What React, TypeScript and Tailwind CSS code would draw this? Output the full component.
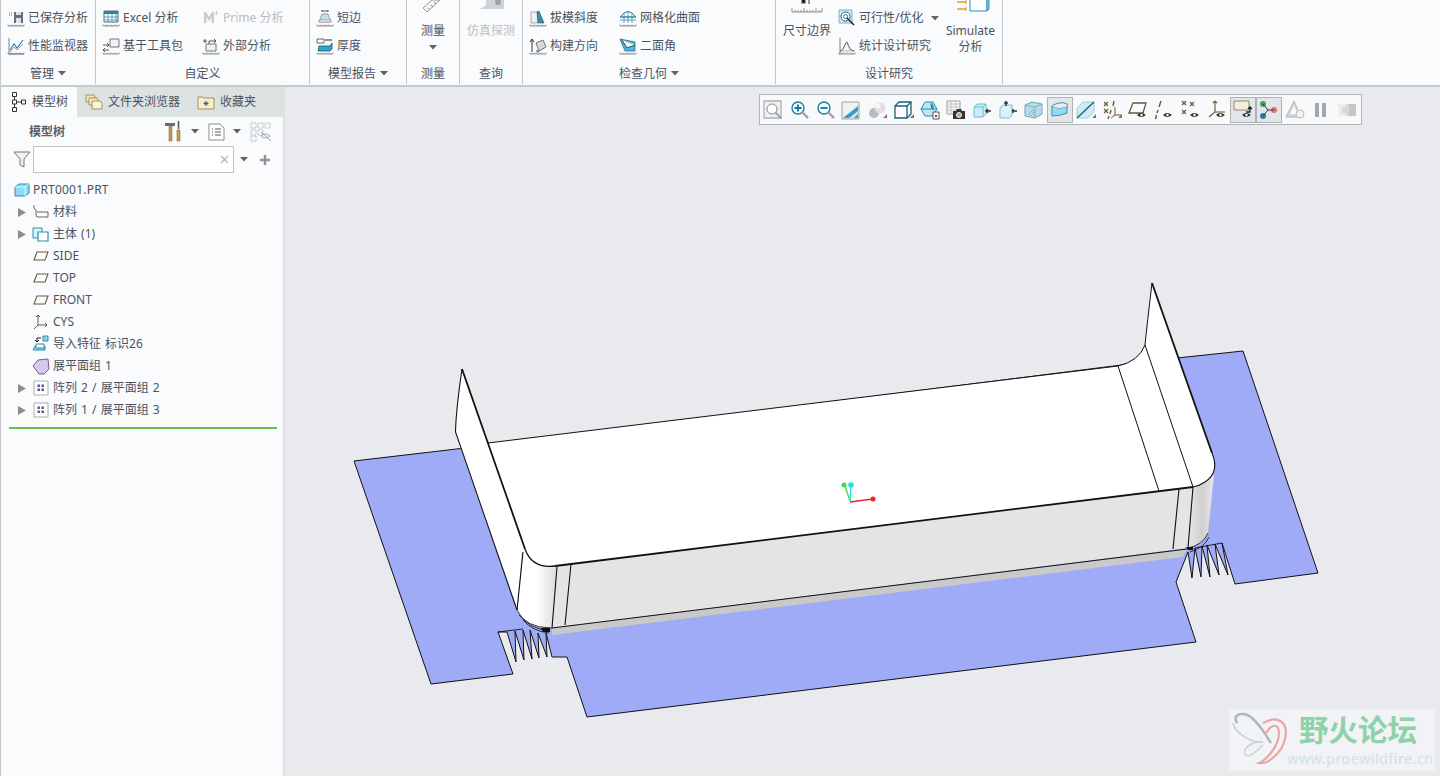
import React from "react";

const Ruler = () => (
  <path d="M1 17h16M1 15.500v1.500M3 16v1M5 15.500v1.500M7 16v1M9 15.500v1.500M11 16v1M13 15.500v1.500M15 16v1M17 15.500v1.500" stroke="#7d8387" strokeWidth="0.8" fill="none" />
);

const I = ({ children, s = 18 }: { children: React.ReactNode; s?: number }) => (
  <svg width={s} height={s} viewBox="0 0 18 18" className="shrink-0" fill="none">{children}</svg>
);

const Caret = ({ c = "#5f6468" }: { c?: string }) => (
  <svg width="8" height="5" viewBox="0 0 8 5" className="shrink-0"><path d="M0 0h8L4 4.500z" fill={c} /></svg>
);

const Item = ({ icon, text, dim, gap = "gap-[3px]" }: { icon: React.ReactNode; text: string; dim?: boolean; gap?: string }) => (
  <div className={`h-[28px] flex items-center whitespace-nowrap ${gap} ${dim ? "text-[#b9bdc1]" : ""}`}>
    {icon}
    <span>{text}</span>
  </div>
);

const Group = ({ w, label, caret, children }: { w: string; label: string; caret?: boolean; children: React.ReactNode }) => (
  <div className={`${w} shrink-0 flex flex-col border-r border-[#c3c7c9] h-[84px]`}>
    <div className="h-[63px] overflow-hidden flex">{children}</div>
    <div className="h-[21px] flex items-center justify-center gap-[4px] text-[#4b5360]">
      <span>{label}</span>
      {caret && <Caret />}
    </div>
  </div>
);

const Col = ({ w, children }: { w: string; children: React.ReactNode }) => (
  <div className={`${w} shrink-0 flex flex-col pt-[4px]`}>{children}</div>
);

const Ribbon = () => (
  <div className="h-[87px] shrink-0 flex bg-[#f9fbfd] border-b-[2px] border-[#c6cccc] border-l border-l-[#c3c7c9] text-[12px] text-[#4b5360]">
    <Group w="w-[95px]" label="管理" caret>
      <Col w="w-full pl-[6px]">
        <Item text="已保存分析" gap="gap-[3px]" icon={<I><path d="M2 4h1M4 4h1M2 6h1M4 6h1" stroke="#777" /><path d="M7 3h9v11H7z" fill="#6a6f73" /><path d="M9 3h5v3H9zM9 9h5v5H9z" fill="#dfe3e6" /><Ruler /></I>} />
        <Item text="性能监视器" gap="gap-[3px]" icon={<I><path d="M2 1v16M2 17h15" stroke="#7d8387" /><path d="M3 13l4-6 3 4 6-8" stroke="#1f7fa0" strokeWidth="1.100" /><path d="M3 15l4-5 3 3 6-6" stroke="#9a9ea2" /><Ruler /></I>} />
      </Col>
    </Group>
    <Group w="w-[214px]" label="自定义">
      <Col w="w-[106px] pl-[6px]">
        <Item text="Excel 分析" gap="gap-[3px]" icon={<I><path d="M2 2h14v11H2z" fill="#fff" stroke="#666" /><path d="M2 2h14v3H2z" fill="#1b86b0" /><path d="M2 8h14M2 11h14M6 5v8M10 5v8M14 5v8" stroke="#1b86b0" strokeWidth="0.7" /><Ruler /></I>} />
        <Item text="基于工具包" gap="gap-[3px]" icon={<I><path d="M8 2h9v8H8z" fill="#eef3f5" stroke="#777" /><path d="M1 8h6M5 6l2 2-2 2M1 13h6M3 11l-2 2 2 2" stroke="#444" strokeWidth="0.9" /><Ruler /></I>} />
      </Col>
      <Col w="w-[100px]">
        <Item text="Prime 分析" dim gap="gap-[3px]" icon={<I><path d="M2 14V3h2l3 5 3-5h2v11h-2.500V8L7 12 4.500 8v6z" fill="#c8cccf" /><path d="M15 2l-1 4" stroke="#c8cccf" strokeWidth="1.500" /></I>} />
        <Item text="外部分析" icon={<I><path d="M4 7h10v7H4z" fill="#eef3f5" stroke="#777" /><path d="M7 7V4h7M12 2l2 2-2 2M3 2v4M1 4h4" stroke="#444" strokeWidth="0.9" /><Ruler /></I>} />
      </Col>
    </Group>
    <Group w="w-[97px]" label="模型报告" caret>
      <Col w="w-full pl-[6px]">
        <Item text="短边" icon={<I><path d="M6 2h6M6 1v2M12 1v2" stroke="#333" strokeWidth="0.8" /><path d="M6 5h6l3 8H3z" fill="#bfe3f2" stroke="#777" strokeWidth="0.7" /><path d="M3 11h12v2H3z" fill="#fff" stroke="#777" strokeWidth="0.6" /><Ruler /></I>} />
        <Item text="厚度" icon={<I><path d="M1 2h7v4H1z" fill="#fff" stroke="#222" strokeWidth="0.7" /><path d="M9 3h7" stroke="#222" /><path d="M3 9h11l2-3v6l-2 2H2z" fill="#35a2c9" stroke="#135d78" strokeWidth="0.8" /><Ruler /></I>} />
      </Col>
    </Group>
    <Group w="w-[53px]" label="测量">
      <div className="w-full flex flex-col items-center">
        <svg width="24" height="12" viewBox="0 0 24 12" className="shrink-0"><path d="M2 8l9-8h8L6 12z" fill="#f2f4f5" stroke="#999" /><path d="M7 8l2 2M10 5l2 2M13 2l2 2" stroke="#888" /></svg>
        <span className="mt-[10px] leading-[17px]">测量</span>
        <div className="mt-[6px]"><Caret /></div>
      </div>
    </Group>
    <Group w="w-[63px]" label="查询">
      <div className="w-full flex flex-col items-center text-[#b9bdc1]">
        <svg width="30" height="9" viewBox="0 0 30 9" className="shrink-0"><path d="M4 9l6-4V0h18v9z" fill="#d0d3d5" /><circle cx="22" cy="2" r="3" fill="#9ea2a5" /></svg>
        <span className="mt-[13px] leading-[17px]">仿真探测</span>
      </div>
    </Group>
    <Group w="w-[253px]" label="检查几何" caret>
      <Col w="w-[96px] pl-[6px]">
        <Item text="拔模斜度" icon={<I><path d="M2 3h7v11H2z" fill="#eef1f2" stroke="#888" strokeWidth="0.7" /><path d="M8 3l2-1 5 12H9z" fill="#3a8fb0" stroke="#235" strokeWidth="0.5" /><Ruler /></I>} />
        <Item text="构建方向" icon={<I><path d="M3 15V3M1 5l2-3 2 3" stroke="#333" /><path d="M7 6l7-3 3 7-7 4z" fill="#d5d9dc" stroke="#777" /><path d="M7 13l4 1-3 2z" fill="#3a8fb0" /><Ruler /></I>} />
      </Col>
      <Col w="w-[130px]">
        <Item text="网格化曲面" icon={<I><path d="M1 8q8-11 16 0z" fill="#fff" stroke="#1f7fa0" /><path d="M1 11h16M5 4v10M9 2v12M13 4v10M1 8h16" stroke="#1f7fa0" strokeWidth="0.7" /><Ruler /></I>} />
        <Item text="二面角" icon={<I><path d="M1 2l15 3v9H6z" fill="#4db8dc" stroke="#1c5f78" strokeWidth="0.7" /><path d="M3 3l5 8 8-3" fill="#f3f7f9" stroke="#222" strokeWidth="0.8" /><Ruler /></I>} />
      </Col>
    </Group>
    <Group w="w-[227px]" label="设计研究">
      <div className="w-[62px] shrink-0 flex flex-col items-center">
        <svg width="32" height="14" viewBox="0 0 32 14" className="shrink-0"><path d="M1 12h30M1 8v4M4 10v2M7 10v2M10 10v2M13 8v4M16 10v2M19 10v2M22 10v2M25 8v4M28 10v2M31 8v4" stroke="#777" strokeWidth="0.8" /><path d="M11 0v3h3V0M18 0v4" stroke="#555" strokeWidth="1.200" /></svg>
        <span className="mt-[8px] leading-[17px] whitespace-nowrap">尺寸边界</span>
      </div>
      <Col w="w-[104px]">
        <div className="h-[28px] flex items-center gap-[3px] whitespace-nowrap">
          <I><path d="M1 1h13v13H1z" fill="#cfeaf5" stroke="#6db7d3" /><circle cx="7.500" cy="7.500" r="4.500" fill="#fff" stroke="#555" /><circle cx="7.500" cy="7.500" r="2" stroke="#1f7fa0" /><path d="M9 9l7 7" stroke="#222" strokeWidth="1.500" /></I>
          <span>可行性/优化</span>
          <div className="ml-[5px]"><Caret /></div>
        </div>
        <Item text="统计设计研究" icon={<I><path d="M2 1v16" stroke="#7d8387" /><path d="M2 14q3 0 5-6t3 0q2 6 6 6" stroke="#444" strokeWidth="0.9" /><path d="M2 14h15" stroke="#888" strokeWidth="0.6" /><Ruler /></I>} />
      </Col>
      <div className="w-[60px] shrink-0 flex flex-col items-center pr-[3px]">
        <svg width="34" height="12" viewBox="0 0 34 12" className="shrink-0 ml-[6px]"><path d="M0 2h9M0 9h9" stroke="#e0a020" strokeWidth="1.400" /><path d="M9 0v4M9 7v4" stroke="#e0a020" /><path d="M13 -2h17v13H13z" fill="#fff" stroke="#2f8db3" /><path d="M30 -2l2 -1v12l-2 2z" fill="#9cd3e8" stroke="#2f8db3" /></svg>
        <span className="mt-[10px] leading-[17px]">Simulate</span>
        <span className="leading-[16px]">分析</span>
      </div>
    </Group>
  </div>
);

const Plane = () => <I s={18}><path d="M2 13l3-8h11l-3 8z" stroke="#6b5a3a" strokeWidth="1.100" /></I>;
const Arrow = () => <svg width="8" height="9" viewBox="0 0 8 9" className="shrink-0"><path d="M0 0l8 4.500L0 9z" fill="#8b8f92" /></svg>;
const Pattern = () => (
  <I><path d="M2 2h14v14H2z" fill="#fff" stroke="#a9adb1" /><path d="M5 5h3v3H5zM10 5h3v3h-3zM5 10h3v3H5zM10 10h3v3h-3z" fill="#5d4a88" transform="translate(1.500 1.500) scale(0.8)" /></I>
);

const rows: { t: string; arrow?: boolean; icon: React.ReactNode }[] = [
  { t: "材料", arrow: true, icon: <I><path d="M2 2q-1 4 2 5v5q0 2 2 2h10V9H5" stroke="#555" strokeWidth="0.9" /></I> },
  { t: "主体 (1)", arrow: true, icon: <I><path d="M1 3h9v10H1z" fill="#d9f1fa" stroke="#2f8db3" /><path d="M6 7h10v9H6z" fill="#fff" stroke="#2f8db3" strokeWidth="1.200" /></I> },
  { t: "SIDE", icon: <Plane /> },
  { t: "TOP", icon: <Plane /> },
  { t: "FRONT", icon: <Plane /> },
  { t: "CYS", icon: <I><path d="M6 2v10M6 12l9 0M6 12l-4 4M4 4l2-2 2 2M13 10l2 2-2 2" stroke="#6b5a3a" /></I> },
  { t: "导入特征 标识26", icon: <I><path d="M3 11h10v4H1z" fill="#8fd3ea" stroke="#2f8db3" /><path d="M4 9h8v4H4z" fill="#fff" stroke="#2f8db3" /><path d="M11 1h5v5h-5z" fill="#8fd3ea" stroke="#2f8db3" /><path d="M9 3H5v4M3 5l2 2 2-2" stroke="#222" /></I> },
  { t: "展平面组 1", icon: <I><path d="M1 9l5-6 10-1 1 10-5 5H7z" fill="#d6c8ee" stroke="#75608f" /></I> },
  { t: "阵列 2 / 展平面组 2", arrow: true, icon: <Pattern /> },
  { t: "阵列 1 / 展平面组 3", arrow: true, icon: <Pattern /> },
];

const Panel = () => (
  <div className="w-[285px] shrink-0 flex flex-col bg-[#dee2e5] border-l border-[#c3c7c9]">
    <div className="h-[30px] shrink-0 flex items-stretch bg-[#dce2e2] text-[12px] text-[#4b5360]">
      <div className="w-[76px] bg-[#f9fbfd] flex items-center pl-[11px] gap-[6px]">
        <svg width="14" height="20" viewBox="0 0 14 20" className="shrink-0" fill="none"><path d="M.500.500h4v4h-4zM.500 8h4v4h-4zM.500 15.500h4v4h-4zM9.500 8h4v4h-4zM2.500 4.500V8M2.500 12v3.500M4.500 10h5" stroke="#333" strokeWidth="1" /></svg>
        <span>模型树</span>
      </div>
      <div className="flex items-center pl-[8px] gap-[5px]">
        <I><path d="M1 2h8l1 2v5H1z" fill="#f3e6b8" stroke="#a88f58" /><path d="M4 5h8l1 2v5H4z" fill="#f6ecc6" stroke="#a88f58" /><path d="M7 8h8l2 2v6H7z" fill="#fbf3d8" stroke="#a88f58" /></I>
        <span>文件夹浏览器</span>
      </div>
      <div className="flex items-center pl-[17px] gap-[5px]">
        <I><path d="M1 4h5l1 1h10v11H1z" fill="#f8eecb" stroke="#a88f58" /><path d="M9 8v5M6.500 10.500h5M7.200 8.700l3.600 3.600M10.800 8.700l-3.600 3.600" stroke="#1c5f88" strokeWidth="0.9" /></I>
        <span>收藏夹</span>
      </div>
    </div>
    <div className="flex-1 w-[282px] bg-[#f9fbfd] flex flex-col text-[12px] text-[#4b5360]">
      <div className="h-[29px] shrink-0 flex items-center pl-[28px] pr-[9px]">
        <span className="font-bold text-[#5a5f66]">模型树</span>
        <svg width="18" height="21" viewBox="0 0 18 21" className="ml-[100px] shrink-0"><path d="M0 2h10v3H0z" fill="#6b6e70" /><path d="M4 5h3v15H4z" fill="#c79a4e" stroke="#7a5c28" strokeWidth="0.5" /><path d="M13.500 0v8" stroke="#555" strokeWidth="1.500" /><path d="M12 9h3v11h-3z" fill="#c79a4e" stroke="#7a5c28" strokeWidth="0.5" /></svg>
        <div className="ml-[8px]"><Caret /></div>
        <svg width="17" height="18" viewBox="0 0 17 18" className="ml-[9px] shrink-0"><path d="M1 1h11l4 4v12H1z" fill="#fff" stroke="#8a8e91" /><path d="M4 6h1M7 6h6M4 9h1M7 9h6M4 12h1M7 12h6" stroke="#555" /></svg>
        <div className="ml-[8px]"><Caret /></div>
        <svg width="22" height="20" viewBox="0 0 22 20" className="ml-[9px] shrink-0" fill="none"><path d="M1 1h5v5H1zM8 1h5v5H8zM15 1h5v5h-5zM1 8h5v5H1zM1 14h5v5H1zM8 8h5v5H8z" stroke="#c8ccce" /><path d="M11 14q4-4 9 0q-5 4-9 0zM11 10l10 9" stroke="#9ea2a5" /></svg>
      </div>
      <div className="h-[27px] shrink-0 flex items-center pl-[12px]">
        <svg width="18" height="17" viewBox="0 0 18 17" className="shrink-0"><path d="M1 1h16l-6 7v8l-4-2V8z" fill="#eef0f1" stroke="#777" /></svg>
        <div className="ml-[2px] w-[201px] h-[27px] bg-white border border-[#bfc3c5] flex items-center justify-end pr-[4px]">
          <svg width="9" height="9" viewBox="0 0 9 9"><path d="M1 1l7 7M8 1l-7 7" stroke="#aeb2b5" strokeWidth="1.100" /></svg>
        </div>
        <div className="ml-[6px]"><Caret /></div>
        <svg width="12" height="12" viewBox="0 0 12 12" className="ml-[11px] shrink-0"><path d="M6 1v10M1 6h10" stroke="#8e9296" strokeWidth="2.400" /></svg>
      </div>
      <div className="h-[22px] mt-[6px] shrink-0 flex items-center pl-[12px] gap-[2px]">
        <I s={18}><path d="M2 6l4-3h10v9l-4 3H2z" fill="#8fdcf7" stroke="#2f8db3" /><path d="M12 15V6H2M12 6l4-3" stroke="#d9f5ff" /></I>
        <span className="tracking-[0.2px]">PRT0001.PRT</span>
      </div>
      {rows.map((r) => (
        <div key={r.t} className="h-[22px] shrink-0 flex items-center pl-[17px]">
          <div className="w-[14px] shrink-0">{r.arrow && <Arrow />}</div>
          {r.icon}
          <span className="ml-[3px] whitespace-nowrap [word-spacing:1px]">{r.t}</span>
        </div>
      ))}
      <div className="h-[2px] mt-[6px] ml-[8px] w-[268px] bg-[#5fc24a]" />
    </div>
  </div>
);

const Eye = () => (
  <g><path d="M9 15q4-4 9 0q-5 4-9 0z" fill="#333" /><circle cx="13.500" cy="15" r="1.200" fill="#fff" /></g>
);
const Tri = () => <path d="M16 18h4v-4z" fill="#777" />;
const B = "#6b5a3a";
const X = ({ x, y }: { x: number; y: number }) => <path d={`M${x - 2} ${y - 2}l4 4M${x + 2} ${y - 2}l-4 4`} stroke={B} strokeWidth="1.200" />;
const Mag = ({ sign }: { sign?: "+" | "-" }) => (
  <g><circle cx="9" cy="8" r="6" fill="#f1fbff" stroke="#1f7fa0" strokeWidth="1.400" /><path d="M13 12l6 6" stroke="#9ea2a5" strokeWidth="2.400" /><path d={sign === "+" ? "M5.500 8h7M9 4.500v7" : "M5.500 8h7"} stroke="#14739a" strokeWidth="1.800" /></g>
);

const tools: { sel?: boolean; el: React.ReactNode }[] = [
  { el: <g><path d="M1 1h17v17H1z" fill="#eef1f2" stroke="#aeb2b5" strokeWidth="1.300" /><circle cx="9" cy="9" r="5" fill="#fff" stroke="#888" /><path d="M12.500 12.500l6 6" stroke="#a2a6a9" strokeWidth="2" /></g> },
  { el: <Mag sign="+" /> },
  { el: <Mag sign="-" /> },
  { el: <g><path d="M1 2h17v17H1z" fill="#eef2f4" stroke="#9ea2a5" /><path d="M2 18L17 6v12z" fill="#3a9cc2" /><path d="M8 18l9-7v3l-4 4z" fill="#c9e8f3" /></g> },
  { el: <g><circle cx="7" cy="13" r="5" fill="#b8bbbd" /><circle cx="13" cy="8" r="5.500" fill="#dfe1e2" /><circle cx="11" cy="6" r="2.500" fill="#f8f8f8" /><Tri /></g> },
  { el: <g><path d="M1 6l4-4h12v12l-4 4H1z" fill="#fff" stroke="#1c5f78" strokeWidth="1.300" /><path d="M1 6h12v12M13 6l4-4" stroke="#1c5f78" strokeWidth="1.300" /><Tri /></g> },
  { el: <g><path d="M1 9l4-7h8l4 7-4 7H5z" fill="#bfe5f3" stroke="#2f8db3" /><path d="M1 9h16" stroke="#2f8db3" /><path d="M11 2q3 3 3 6t-3 0q-1-3 0-6z" fill="#2f8db3" /><path d="M13 12h6v7h-6z" fill="#fff" stroke="#555" /><path d="M15 15h2v2h-2z" fill="#555" /></g> },
  { el: <g><path d="M1 1h13v13H1z" fill="#f5f6f7" stroke="#9ea2a5" /><path d="M1 4h13M1 7h13M1 10h13M5 1v13M10 1v13" stroke="#b1b4b7" strokeWidth="0.7" /><path d="M7 11h3l1-2h4l1 2h3v8H7z" fill="#333" /><circle cx="13" cy="15" r="2.500" fill="#aaa" stroke="#eee" /></g> },
  { el: <g><path d="M2 7l3-3h9v10l-3 3H2z" fill="#c9ecf7" stroke="#72bcd6" /><path d="M2 7h9v10M11 7l3-3" stroke="#72bcd6" /><path d="M14 11h5M16 9l-2 2 2 2" stroke="#333" strokeWidth="1.500" /></g> },
  { el: <g><path d="M2 8l3-3h9v10l-3 3H2z" fill="#d9f2fa" stroke="#72bcd6" /><path d="M14 11h5M15 9v4M8 1v5M6 3h4" stroke="#333" strokeWidth="1.500" /></g> },
  { el: <g><path d="M1 5l7-3 10 2v10l-7 4-10-2z" fill="#b9dbe6" stroke="#6ea5b8" /><path d="M1 5l10 2v11M11 7l7-3M4 15l6-6M7 16l4-5" stroke="#7cb3c5" /></g> },
  { sel: true, el: <g><path d="M2 6q8-5 15-2v9q-7 3-15 3z" fill="#8fdcf7" stroke="#2f8db3" /><path d="M2 6q8-5 15-2l0 3q-7 3-15 0z" fill="#e9edef" stroke="#7c8a90" strokeWidth="0.7" /></g> },
  { el: <g><path d="M1 8l6-6h11v10l-6 6H1z" fill="#cfeaf5" stroke="#9fd0e2" /><path d="M1 18L18 2" stroke="#1f5f78" strokeWidth="1.300" /><Tri /></g> },
  { el: <g><X x={4} y={4} /><path d="M12 1l-1 5M9 10l-1 4M7 16l-1 3" stroke={B} strokeWidth="1.400" /><path d="M13 7v8M13 15h6M9 18l4-3" stroke={B} /><X x={4} y={11} /><Tri /></g> },
  { el: <g><path d="M1 13L5 3h13l-3 10z" fill="#f9fbfd" stroke={B} strokeWidth="1.300" /><Eye /></g> },
  { el: <g><path d="M7 1L5 7M4 10l-1 3M2.500 15l-1 4" stroke={B} strokeWidth="1.400" /><Eye /></g> },
  { el: <g><X x={3} y={3} /><X x={11} y={4} /><X x={3} y={12} /><Eye /></g> },
  { el: <g><path d="M8 1v11M8 12l10 0M8 12l-6 5M6 3l2-2 2 2" stroke={B} strokeWidth="1.100" /><Eye /></g> },
  { sel: true, el: <g><path d="M1 1h15v9H1z" fill="#f6efd8" stroke="#888" /><path d="M13 12h4V7M15 9l2-2 2 2" stroke="#222" strokeWidth="1.300" /><Eye /></g> },
  { sel: true, el: <g><circle cx="4" cy="4" r="3" fill="#4c9c5f" /><circle cx="15" cy="10" r="3" fill="#e0726c" /><circle cx="4" cy="16" r="3" fill="#2f7ba8" /><path d="M4 4l5 6h6M4 16l5-6" stroke="#333" /></g> },
  { el: <g><path d="M9 1L1 17h15z" fill="#d5d7d9" stroke="#b1b4b7" /><path d="M9 6l-4 8h8z" fill="#f9fbfd" /><circle cx="15" cy="14" r="4" fill="#f2f3f4" stroke="#bbb" /></g> },
  { el: <path d="M4 3h4v14H4zM11 3h4v14h-4z" fill="#a4a8ab" /> },
  { el: <g><path d="M1 4h18v12H1z" fill="#d5d7d9" /><path d="M1 4h8v3H5v6h4v3H1z" fill="#eceded" /><path d="M12 4h7v12h-7z" fill="#c4c6c8" /></g> },
];

const Toolbar = () => (
  <div className="absolute left-[474px] top-[7px] h-[31px] w-[603px] bg-[#f7f9fb] border border-[#b3b6b8] flex items-center">
    {tools.map((t, i) => (
      <div key={i} className={`w-[26.100px] h-[26px] shrink-0 flex items-center justify-center ${t.sel ? "bg-[#e3e6e9] border border-[#afb2b5]" : ""}`}>
        <svg width="20" height="20" viewBox="0 0 20 20" fill="none">{t.el}</svg>
      </div>
    ))}
  </div>
);

const Model = () => (
  <svg className="absolute inset-0" width="1155" height="689" viewBox="285 87 1155 689" fill="none">
    <defs>
      <linearGradient id="lc" x1="520" y1="0" x2="556" y2="0" gradientUnits="userSpaceOnUse"><stop offset="0.450" stopColor="#fff" /><stop offset="1" stopColor="#dcdcdc" /></linearGradient>
      <linearGradient id="rc" x1="1190" y1="0" x2="1214" y2="0" gradientUnits="userSpaceOnUse"><stop offset="0" stopColor="#e4e4e4" /><stop offset="0.500" stopColor="#cfcfcf" /><stop offset="1" stopColor="#e9e9e9" /></linearGradient>
    </defs>
    <path d="M354 461L465 448L1177 358L1243 351L1318 573L1235 584L1222 543L1228 575L1215 544L1219 575L1207 545L1210 577L1202 546L1201 577L1195 548L1192 578L1188 552L1176 582L1196 642L587 717L567 657L552 657L546 633L547 657L538 633L539 658L530 630L532 659L523 630L524 660L515 631L516 662L507 632L498 632L513 674L431 684Z" fill="#9fabf7" stroke="#111" strokeWidth="1" />
    <path d="M498 632L523 629M1195 548L1222 543" stroke="#111" strokeWidth="0.9" />
    <path d="M552 628L1187 549L1183 557L552 635Z" fill="#c9c9c9" />
    <path d="M557 566L1193 487L1188 548L552 628Z" fill="#e4e4e4" />
    <path d="M523 552L557 566L552 628Q525 628 517 610Z" fill="url(#lc)" />
    <path d="M1193 487L1214 475L1208 533Q1203 545 1188 548Z" fill="url(#rc)" />
    <path d="M488 443L1118 366Q1141 362 1145 345L1152 283L1212 453Q1220 472 1205 482Q1199 486 1193 487L555 566Q534 569 527 557L522 552L517 610L456 435L455 430L462 369Z" fill="#fff" />
    <path d="M488 443L1118 366Q1139 361 1145 345Q1147 325 1152 283" stroke="#111" strokeWidth="1" />
    <path d="M1152 283L1212 453" stroke="#111" strokeWidth="1.800" />
    <path d="M1212 453Q1220 472 1205 482Q1199 486 1193 487" stroke="#111" strokeWidth="1.100" />
    <path d="M462 369Q456 410 455.500 432L517 610" stroke="#111" strokeWidth="1.100" />
    <path d="M462 369L525 549" stroke="#111" strokeWidth="1.800" />
    <path d="M525 549Q532 569 555 566" stroke="#111" strokeWidth="1.300" />
    <path d="M555 566L1193 487" stroke="#111" strokeWidth="1.800" />
    <path d="M1118 366L1159 491M1145 345L1193 487" stroke="#111" strokeWidth="1" />
    <path d="M523 552L517 610M557 567L552 628M571 564L565 625M1179 489L1173 549M1193 487L1188 548" stroke="#111" strokeWidth="1.100" />
    <path d="M552 628L1187 549" stroke="#111" />
    <path d="M517 610Q525 628 552 628M519 615Q530 629 550 631M523 620Q532 631 549 633" stroke="#111" strokeWidth="0.800" />
    <path d="M1188 548Q1203 545 1208 533M1190 552Q1204 548 1209 537" stroke="#111" strokeWidth="0.800" />
    <path d="M541 628h9v4h-7z" fill="#111" />
    <path d="M1186 547h7v3h-5z" fill="#111" />
    <path d="M850 501L845 486" stroke="#35e03a" strokeWidth="1.300" />
    <circle cx="844" cy="485" r="2.500" fill="#35e03a" />
    <path d="M850 501L851 486" stroke="#1fe0ee" strokeWidth="1.300" />
    <circle cx="851" cy="485" r="2.800" fill="#1fe0ee" />
    <path d="M850 502L873 499" stroke="#f02525" strokeWidth="1.300" />
    <circle cx="873" cy="499" r="2.500" fill="#f02525" />
  </svg>
);

const Watermark = () => (
  <div className="absolute right-[5px] bottom-[5px] w-[206px] h-[62px] bg-[#f1f3f6] flex">
    <svg width="60" height="62" viewBox="0 0 60 62" className="shrink-0" fill="none">
      <path d="M8 14C2 4 16 2 24 10C32 17 38 28 42 34" stroke="#a9b7c4" strokeWidth="2.400" />
      <path d="M4 14C6 24 22 34 34 33C24 32 14 38 16 45C18 50 26 44 34 36" stroke="#c9d0d6" strokeWidth="1.500" />
      <path d="M34 14C48 6 60 12 56 30C53 44 38 56 30 54C36 52 50 38 50 24C50 14 42 14 36 26" stroke="#e8a6a6" strokeWidth="2.200" />
    </svg>
    <div className="flex flex-col items-start">
      <span className="text-[29.500px] leading-[32px] mt-[5px] ml-[10px] font-bold text-[#8fd1a9] whitespace-nowrap">野火论坛</span>
      <span className="text-[14.500px] leading-[18px] mt-[3px] -ml-[2px] tracking-[0.400px] text-[#cfe3e3] whitespace-nowrap">www.proewildfire.cn</span>
    </div>
  </div>
);

export default function App() {
  return (
    <div className="w-[1440px] h-[776px] overflow-hidden flex flex-col bg-[#e8eaee] [font-family:'Noto_Sans','Noto_Sans_CJK_SC',sans-serif]">
      <Ribbon />
      <div className="flex-1 flex min-h-0">
        <Panel />
        <div className="relative flex-1 bg-[#e8eaee]">
          <Model />
          <Toolbar />
          <Watermark />
        </div>
      </div>
    </div>
  );
}
